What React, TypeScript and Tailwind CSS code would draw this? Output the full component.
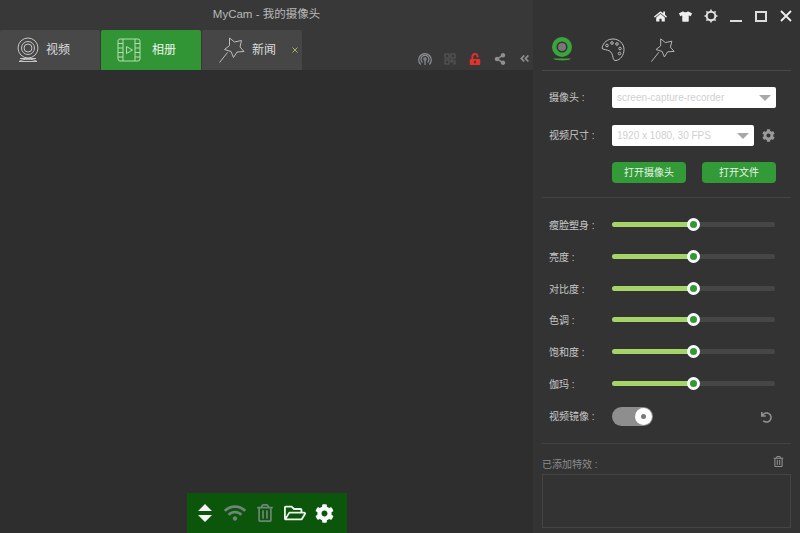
import React from "react";
import { FaHome, FaTshirt, FaShareAlt, FaCog, FaRegFolderOpen, FaWifi, FaRegTrashAlt, FaUnlockAlt, FaAngleDoubleLeft, FaUndo } from "react-icons/fa";

const font = { fontFamily: '"Liberation Sans", "Noto Sans CJK SC", sans-serif' };

function Webcam({ color = "#cfcfcf", size = 28, filled = false }: { color?: string; size?: number; filled?: boolean }) {
  return (
    <svg width={size} height={size} viewBox="0 0 28 28" fill="none">
      {filled ? (
        <>
          <circle cx="14" cy="11" r="10" fill={color} />
          <circle cx="14" cy="11" r="5.5" fill="#333" />
          <circle cx="14" cy="11" r="4" fill="#777" />
          <path d="M5 22.500h18c-1 2.500-16 2.500-18 0z" fill={color} />
        </>
      ) : (
        <>
          <circle cx="14" cy="12" r="10" stroke={color} strokeWidth="1" />
          <circle cx="14" cy="12" r="6.5" stroke={color} strokeWidth="1" />
          <circle cx="14" cy="12" r="4" stroke={color} strokeWidth="1" />
          <path d="M6 22.5h16M5 25.5c3-3 15-3 18 0H5z" stroke={color} strokeWidth="1" />
        </>
      )}
    </svg>
  );
}

function Film() {
  return (
    <svg width="24" height="24" viewBox="0 0 24 24" fill="none" stroke="#b7dcb5" strokeWidth="1">
      <rect x="1" y="1" width="22" height="22" rx="2" />
      <path d="M6 1v22M18 1v22M1 5.500h5M1 10h5M1 14.500h5M1 19h5M18 5.500h5M18 10h5M18 14.500h5M18 19h5" />
      <path d="M9.500 8.500v7l6-3.500z" />
    </svg>
  );
}

function Wand({ size = 28, color = "#bdbdbd" }: { size?: number; color?: string }) {
  return (
    <svg width={size} height={size} viewBox="0 0 28 28" fill="none" stroke={color} strokeWidth="1" strokeLinejoin="round">
      <path d="M11.5 2l5 4 7-1.500-1.500 6.500 4 4.500-7 .5-3.500 5.500-2.500-6-6.500-2 5-4z" />
      <path d="M9.500 16.500L1.500 26.500" />
    </svg>
  );
}

function Palette() {
  return (
    <svg width="24" height="24" viewBox="0 0 24 24" fill="none" stroke="#bdbdbd" strokeWidth="1">
      <path d="M1 10.500C2 4 7 1 12 1c6 0 11 4.500 11 10.500 0 6-4 10.500-8 11-2 .2-2.500-1-3-3-.5-2.500-1-5-3.500-6.500-2.500-1.500-5-1-7.500-2.500z" />
      <circle cx="6" cy="7.500" r="1.300" />
      <circle cx="11" cy="5" r="1.300" />
      <circle cx="16" cy="6" r="1.300" />
      <circle cx="19" cy="10.500" r="1.300" />
      <circle cx="18.500" cy="15.500" r="1.300" />
    </svg>
  );
}

function Qr() {
  return (
    <svg width="12" height="12" viewBox="0 0 12 12" fill="none" stroke="#555" strokeWidth="1.200">
      <rect x="1" y="1" width="4" height="4" />
      <rect x="7" y="1" width="4" height="4" />
      <rect x="1" y="7" width="4" height="4" />
      <path d="M7 7h2v2H7zM11 7v4H9" />
    </svg>
  );
}

function Broadcast() {
  return (
    <svg width="14" height="14" viewBox="0 0 14 14" fill="none" stroke="#8a8f93" strokeWidth="1.200">
      <circle cx="7" cy="7" r="1.200" />
      <path d="M4.500 10.500a4 4 0 1 1 5 0M2.700 12.500a6.300 6.300 0 1 1 8.600 0M7 8v5" />
    </svg>
  );
}

function SunGear() {
  return (
    <svg width="14" height="14" viewBox="0 0 14 14" fill="none" stroke="#e4e4e4">
      <circle cx="7" cy="7" r="4.300" strokeWidth="2" />
      <path d="M7 0.500v1.500M7 12v1.500M0.500 7H2M12 7h1.500M2.400 2.400l1 1M10.600 10.600l1 1M11.600 2.400l-1 1M3.400 10.600l-1 1" strokeWidth="1.500" />
    </svg>
  );
}

function SortArrows() {
  return (
    <svg width="14" height="20" viewBox="0 0 14 20" fill="#f5f5f5">
      <path d="M7 1l7 7H0zM0 12h14l-7 7z" />
    </svg>
  );
}

function Slider() {
  return (
    <div className="relative w-[163px] h-[5px] rounded-full bg-[#464646]">
      <div className="h-full w-[81px] rounded-full bg-[#a5d566]" />
      <div className="absolute left-[75px] top-[-4px] w-[13px] h-[13px] rounded-full bg-white flex items-center justify-center">
        <div className="w-[7px] h-[7px] rounded-full bg-[#2f9a35]" />
      </div>
    </div>
  );
}

function Row({ label }: { label: string }) {
  return (
    <div className="flex items-center h-[31.7px]">
      <div className="w-[63px] text-[10px] text-[#c8c8c8] whitespace-pre pt-[2px]">{label}</div>
      <Slider />
    </div>
  );
}

function Caret() {
  return <div className="w-0 h-0 border-l-[6px] border-r-[6px] border-t-[6px] border-l-transparent border-r-transparent border-t-[#a8a8a8]" />;
}

function Select({ text, w }: { text: string; w: string }) {
  return (
    <div className={`${w} h-[21px] bg-white rounded-[2px] flex items-center justify-between pl-[5px] pr-[5px]`}>
      <span className="text-[10px] text-[#cfcfcf]">{text}</span>
      <Caret />
    </div>
  );
}

function Tab({ children, className }: { children: React.ReactNode; className: string }) {
  return <div className={`h-[40px] rounded-t-[2px] flex items-center whitespace-nowrap ${className}`}>{children}</div>;
}

function Box({ children }: { children: React.ReactNode }) {
  return <div className="w-[25px] flex items-center justify-center">{children}</div>;
}

function ToolBox({ children }: { children: React.ReactNode }) {
  return <div className="w-[30px] flex items-center justify-center">{children}</div>;
}

export default function App() {
  return (
    <div className="w-[800px] h-[533px] flex overflow-hidden bg-[#2e2e2e]" style={font}>
      <div className="w-[533px] flex flex-col">
        <div className="h-[70px] bg-[#383838] flex flex-col">
          <div className="h-[30px] flex items-center justify-center text-[11.500px] text-[#b9b9b9]">MyCam - 我的摄像头</div>
          <div className="h-[40px] flex items-end gap-[1px]">
            <Tab className="w-[100px] bg-[#484848] pl-[14px] gap-[4px]">
              <Webcam color="#c4c4c4" />
              <span className="text-[12px] text-[#dcdcdc]">视频</span>
            </Tab>
            <Tab className="w-[100px] bg-[#329535] pl-[16px] gap-[11px]">
              <Film />
              <span className="text-[12px] text-[#eef5ee]">相册</span>
            </Tab>
            <Tab className="w-[100px] bg-[#464646] pl-[16px] gap-[6px]">
              <Wand />
              <span className="text-[12px] text-[#dcdcdc]">新闻</span>
              <svg width="6" height="6" viewBox="0 0 6 6" stroke="#a5b35c" strokeWidth="1" className="ml-[10px]"><path d="M0.500 0.500l5 5M5.500 0.500l-5 5" /></svg>
            </Tab>
            <div className="flex-1 h-[40px] flex items-center justify-end pt-[17px] mr-[-4px]">
              <Box><Broadcast /></Box>
              <Box><Qr /></Box>
              <Box><FaUnlockAlt size={12} color="#e6302a" /></Box>
              <Box><FaShareAlt size={12} color="#8f8f8f" /></Box>
              <Box><FaAngleDoubleLeft size={11} color="#8f8f8f" /></Box>
            </div>
          </div>
        </div>
        <div className="flex-1 flex flex-col items-center justify-end">
          <div className="w-[160px] h-[40px] bg-[#0b560b] flex items-center justify-start pl-[3px]">
            <ToolBox><SortArrows /></ToolBox>
            <ToolBox><FaWifi size={22} color="#6f8577" /></ToolBox>
            <ToolBox><FaRegTrashAlt size={18} color="#6f8577" /></ToolBox>
            <ToolBox><FaRegFolderOpen size={22} color="#f0f5f0" /></ToolBox>
            <ToolBox><FaCog size={19} color="#fafafa" /></ToolBox>
          </div>
        </div>
      </div>

      <div className="w-[267px] bg-[#333333] flex flex-col px-[9px]">
        <div className="h-[30px] flex items-center justify-end pt-[2px] mr-[-7px]">
          <Box><FaHome size={13} color="#eeeeee" /></Box>
          <Box><FaTshirt size={13} color="#eeeeee" /></Box>
          <Box><SunGear /></Box>
          <Box><div className="w-[12px] h-[2px] bg-[#dddddd] mt-[9px]" /></Box>
          <Box><div className="w-[12px] h-[11px] border-2 border-[#dddddd]" /></Box>
          <Box><svg width="12" height="12" viewBox="0 0 12 12" stroke="#eeeeee" strokeWidth="1.800"><path d="M1 1l10 10M11 1L1 11" /></svg></Box>
        </div>
        <div className="h-[41px] flex items-center gap-[25px] pl-[6px] border-b border-[#494949]">
          <Webcam color="#3aa53c" size={28} filled />
          <Palette />
          <Wand size={26} />
        </div>

        <div className="px-[7px] pt-[16px] pb-[14px] border-b border-[#444444]">
          <div className="flex items-center h-[21px]">
            <div className="w-[63px] text-[10px] text-[#c8c8c8] whitespace-pre">摄像头 :</div>
            <Select text="screen-capture-recorder" w="w-[164px]" />
          </div>
          <div className="flex items-center h-[21px] mt-[17px]">
            <div className="w-[63px] text-[10px] text-[#c8c8c8] whitespace-pre">视频尺寸 :</div>
            <Select text="1920 x 1080, 30 FPS" w="w-[142px]" />
            <FaCog size={13} color="#9a9a9a" className="ml-[8px]" />
          </div>
          <div className="flex ml-[63px] mt-[16px] gap-[16px]">
            <div className="w-[74px] h-[21px] rounded-[4px] bg-[#329a36] flex items-center justify-center text-[10px] text-[#e8f2e8]">打开摄像头</div>
            <div className="w-[74px] h-[21px] rounded-[4px] bg-[#329a36] flex items-center justify-center text-[10px] text-[#e8f2e8]">打开文件</div>
          </div>
        </div>

        <div className="px-[7px] pt-[11px] border-b border-[#444444] h-[246px]">
          <Row label="瘦脸塑身 :" />
          <Row label="亮度 :" />
          <Row label="对比度 :" />
          <Row label="色调 :" />
          <Row label="饱和度 :" />
          <Row label="伽玛 :" />
          <div className="flex items-center h-[34px]">
            <div className="w-[63px] text-[10px] text-[#c8c8c8] whitespace-pre">视频镜像 :</div>
            <div className="w-[41px] h-[19px] rounded-full bg-[#8e8e8e] flex items-center justify-end pr-[1px]">
              <div className="w-[17px] h-[17px] rounded-full bg-white flex items-center justify-center">
                <div className="w-[5px] h-[5px] rounded-full bg-[#777777]" />
              </div>
            </div>
            <FaUndo size={11} color="#909090" className="ml-[108px] mt-[2px]" />
          </div>
        </div>

        <div className="flex items-center justify-between h-[30px] pr-[7px] pt-[10px]">
          <span className="text-[10px] text-[#8c8c8c] whitespace-pre">已添加特效 :</span>
          <FaRegTrashAlt size={11} color="#909090" className="mb-[5px]" />
        </div>
        <div className="h-[54px] border border-[#454545]" />
      </div>
    </div>
  );
}
